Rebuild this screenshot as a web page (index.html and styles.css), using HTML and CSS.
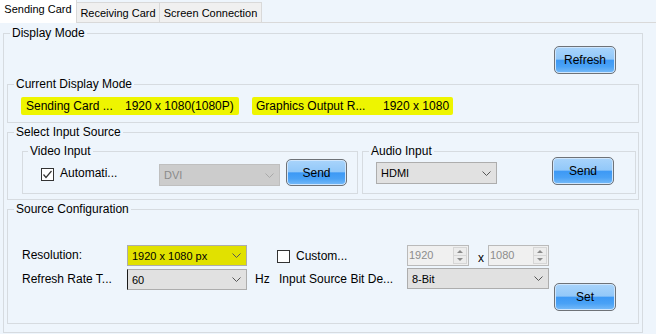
FILE: index.html
```html
<!DOCTYPE html>
<html>
<head>
<meta charset="utf-8">
<link rel="stylesheet" href="styles.css">
</head>
<body>
<div class="tabs">
  <div class="tab active t1">Sending Card</div>
  <div class="tab t2">Receiving Card</div>
  <div class="tab t3">Screen Connection</div>
</div>
<div class="page">
  <fieldset class="group display">
    <legend>Display Mode</legend>
    <div class="refresh-row"><button class="btn refresh">Refresh</button></div>

    <fieldset class="group inner current">
      <legend>Current Display Mode</legend>
      <div class="current-row">
        <span class="hl hl1"><span class="k k1">Sending Card ...</span><span>1920 x 1080(1080P)</span></span>
        <span class="hl hl2"><span class="k k2">Graphics Output R...</span><span>1920 x 1080</span></span>
      </div>
    </fieldset>

    <fieldset class="group inner select">
      <legend>Select Input Source</legend>
      <div class="inputs">
        <fieldset class="group video">
          <legend class="sub">Video Input</legend>
          <div class="video-row">
            <span class="check checked">
              <svg width="11" height="11" viewBox="0 0 11 11"><polyline points="1.5,5.5 4,8.5 9.5,2" fill="none" stroke="#333" stroke-width="1.2"/></svg>
            </span>
            <span class="auto-label">Automati...</span>
            <div class="combo disabled dvi">
              <span>DVI</span>
              <svg class="chev" width="9" height="5" viewBox="0 0 9 5"><polyline points="0.5,0.5 4.5,4.5 8.5,0.5" fill="none" stroke="#a9a9a9" stroke-width="1"/></svg>
            </div>
            <button class="btn send-v">Send</button>
          </div>
        </fieldset>
        <fieldset class="group audio">
          <legend class="sub2">Audio Input</legend>
          <div class="audio-row">
            <div class="combo hdmi">
              <span>HDMI</span>
              <svg class="chev" width="9" height="5" viewBox="0 0 9 5"><polyline points="0.5,0.5 4.5,4.5 8.5,0.5" fill="none" stroke="#555" stroke-width="1"/></svg>
            </div>
            <button class="btn send-a">Send</button>
          </div>
        </fieldset>
      </div>
    </fieldset>

    <fieldset class="group inner source">
      <legend>Source Configuration</legend>
      <div class="source-grid">
        <span class="lbl">Resolution:</span>
        <div class="combo yellow">
          <span>1920 x 1080 px</span>
          <svg class="chev" width="9" height="5" viewBox="0 0 9 5"><polyline points="0.5,0.5 4.5,4.5 8.5,0.5" fill="none" stroke="#555" stroke-width="1"/></svg>
        </div>
        <span></span>
        <div class="custom">
          <span class="check"></span>
          <span class="custom-label">Custom...</span>
        </div>
        <div class="spins">
          <div class="spin spin1">
            <span class="spin-val">1920</span>
            <span class="spin-btns"><span class="sb up"></span><span class="sb down"></span></span>
          </div>
          <span class="times">x</span>
          <div class="spin spin2">
            <span class="spin-val">1080</span>
            <span class="spin-btns"><span class="sb up"></span><span class="sb down"></span></span>
          </div>
        </div>
        <span></span>

        <span class="lbl">Refresh Rate T...</span>
        <div class="combo focus">
          <span>60</span>
          <svg class="chev" width="9" height="5" viewBox="0 0 9 5"><polyline points="0.5,0.5 4.5,4.5 8.5,0.5" fill="none" stroke="#555" stroke-width="1"/></svg>
        </div>
        <span class="lbl hz">Hz</span>
        <span class="lbl bitlbl">Input Source Bit De...</span>
        <div class="combo bit">
          <span>8-Bit</span>
          <svg class="chev" width="9" height="5" viewBox="0 0 9 5"><polyline points="0.5,0.5 4.5,4.5 8.5,0.5" fill="none" stroke="#555" stroke-width="1"/></svg>
        </div>
        <button class="btn set">Set</button>
      </div>
    </fieldset>
  </fieldset>
</div>
</body>
</html>
```

FILE: styles.css
```css
html, body {
  margin: 0;
  padding: 0;
}
body {
  width: 656px;
  height: 334px;
  overflow: hidden;
  background: #eef5fc;
  font-family: "Liberation Sans", Arial, sans-serif;
  font-size: 12px;
  color: #000;
}

/* Tabs */
.tabs {
  display: flex;
  align-items: flex-end;
  height: 22px;
  border-bottom: 1px solid #d9d9d9;
}
.tab {
  box-sizing: border-box;
  height: 20px;
  border: 1px solid #d9d9d9;
  border-bottom: none;
  border-left: none;
  background: #f0f0f0;
  font-size: 11px;
  line-height: 18px;
  padding-top: 1px;
  text-align: center;
  white-space: nowrap;
}
.tab.active {
  height: 23px;
  margin-bottom: -1px;
  background: #ffffff;
  border-top: none;
  padding-top: 0;
}
.t1 { width: 77px; }
.t2 { width: 83px; }
.t3 { width: 102px; }

/* Page and group boxes */
.page {
  padding: 4px 0 0 3px;
}
.group {
  margin: 0;
  padding: 0;
  min-width: 0;
  border: 1px solid #d6dbe0;
  box-sizing: border-box;
}
.group > legend {
  margin-left: 6px;
  padding: 0 2px;
  font-size: 12px;
  line-height: 13px;
  height: 13px;
  white-space: nowrap;
}
.group > legend.sub { margin-left: 5px; }
.group > legend.sub2 { margin-left: 6px; }

.display {
  width: 640px;
  padding: 6px 0 8px 0;
}
.inner {
  margin: 0 3px;
}

.refresh-row {
  display: flex;
  justify-content: flex-end;
  padding-right: 26px;
}

/* Buttons */
.btn {
  box-sizing: border-box;
  margin: 0;
  padding: 0;
  border: 1px solid #6e7277;
  border-radius: 5px;
  font-family: "Liberation Sans", Arial, sans-serif;
  font-size: 12px;
  color: #000;
  background: linear-gradient(to bottom, #a9d4fb 0%, #92c8f9 46%, #3d99f5 52%, #4aa2f6 75%, #78bbf8 100%);
  box-shadow: inset 0 0 0 1px #cfe6fd;
  line-height: 1;
}
.refresh { width: 62px; height: 28px; }

/* Current display mode */
.current {
  margin-top: 4px;
  padding: 6px 0 7px 0;
}
.current-row {
  display: flex;
  height: 18px;
  padding-left: 13px;
}
.hl {
  display: flex;
  box-sizing: border-box;
  height: 18px;
  line-height: 18px;
  background: #eef500;
  border-radius: 2px;
  white-space: nowrap;
}
.hl1 { width: 218px; padding-left: 5px; }
.hl2 { width: 201px; padding-left: 4px; margin-left: 13px; }
.k1 { width: 99px; }
.k2 { width: 127px; }

/* Select input source */
.select {
  margin-top: 3px;
  padding: 6px 0 5px 0;
}
.inputs {
  display: flex;
  padding: 0 2px 0 14px;
}
.video {
  width: 336px;
  padding-bottom: 6px;
}
.audio {
  flex: 1;
  margin-left: 4px;
  padding-bottom: 8px;
}
.video-row, .audio-row {
  display: flex;
  align-items: flex-start;
}
.check {
  box-sizing: border-box;
  width: 13px;
  height: 13px;
  border: 1px solid #333;
  background: #fff;
  display: flex;
  align-items: center;
  justify-content: center;
}
.video-row .check {
  margin: 10px 0 0 18px;
}
.auto-label {
  width: 99px;
  margin: 8px 0 0 6px;
  line-height: 14px;
  white-space: nowrap;
}

/* Combo boxes */
.combo {
  box-sizing: border-box;
  display: flex;
  align-items: center;
  justify-content: space-between;
  height: 21px;
  border: 1px solid #adadad;
  background: #e1e1e1;
  font-size: 11px;
  padding: 0 5px 0 4px;
  white-space: nowrap;
}
.combo.disabled {
  background: #cccccc;
  border-color: #bfbfbf;
  color: #8a8a8a;
}
.dvi {
  width: 121px;
  height: 22px;
  margin-top: 6px;
}
.send-v {
  width: 61px;
  height: 27px;
  margin: 1px 0 0 6px;
}
.hdmi {
  width: 121px;
  height: 22px;
  margin: 4px 0 0 13px;
}
.send-a {
  width: 62px;
  height: 28px;
  margin: -1px 21px 0 auto;
}

/* Source configuration */
.source {
  margin-top: 3px;
  padding: 29px 0 12px 0;
}
.source-grid {
  display: grid;
  grid-template-columns: 105px 120px 30px 130px 142px auto;
  row-gap: 3px;
  align-items: start;
  padding-left: 14px;
}
.lbl {
  line-height: 21px;
  white-space: nowrap;
}
.hz { padding-left: 8px; }
.bitlbl { padding-left: 2px; }
.combo.yellow {
  background: #e1e100;
}
.combo.focus {
  border-left-color: #1a1a1a;
}
.combo.bit {
  margin-top: -1px;
}
.custom {
  display: flex;
  align-items: center;
  height: 21px;
}
.custom .check {
  width: 13px;
  height: 13px;
  margin-top: 1px;
}
.custom-label {
  margin-left: 6px;
  white-space: nowrap;
}
.spins {
  display: flex;
  align-items: flex-start;
}
.spin {
  box-sizing: border-box;
  display: flex;
  height: 21px;
  border: 1px solid #bababa;
  background: #f0f0f0;
}
.spin1 { width: 62px; }
.spin2 { width: 61px; margin-left: 4px; }
.spin-val {
  flex: 1;
  color: #8c8c8c;
  font-size: 11px;
  line-height: 19px;
  padding-left: 1px;
}
.spin-btns {
  width: 14px;
  display: flex;
  flex-direction: column;
  margin: 1px 1px 1px 0;
}
.sb {
  flex: 1;
  box-sizing: border-box;
  border: 1px solid #d6d6d6;
  background: #ececec;
  position: relative;
}
.sb.down { border-top: none; }
.sb::after {
  content: "";
  position: absolute;
  left: 3px;
  top: 2px;
  width: 0;
  height: 0;
  border-left: 3px solid transparent;
  border-right: 3px solid transparent;
}
.sb.up::after { border-bottom: 3px solid #8a8a8a; }
.sb.down::after { border-top: 3px solid #8a8a8a; top: 2px; }
.times {
  margin: 6px 0 0 9px;
  width: 6px;
  line-height: 14px;
}
.set {
  width: 62px;
  height: 28px;
  margin: 14px 0 0 5px;
}
```
